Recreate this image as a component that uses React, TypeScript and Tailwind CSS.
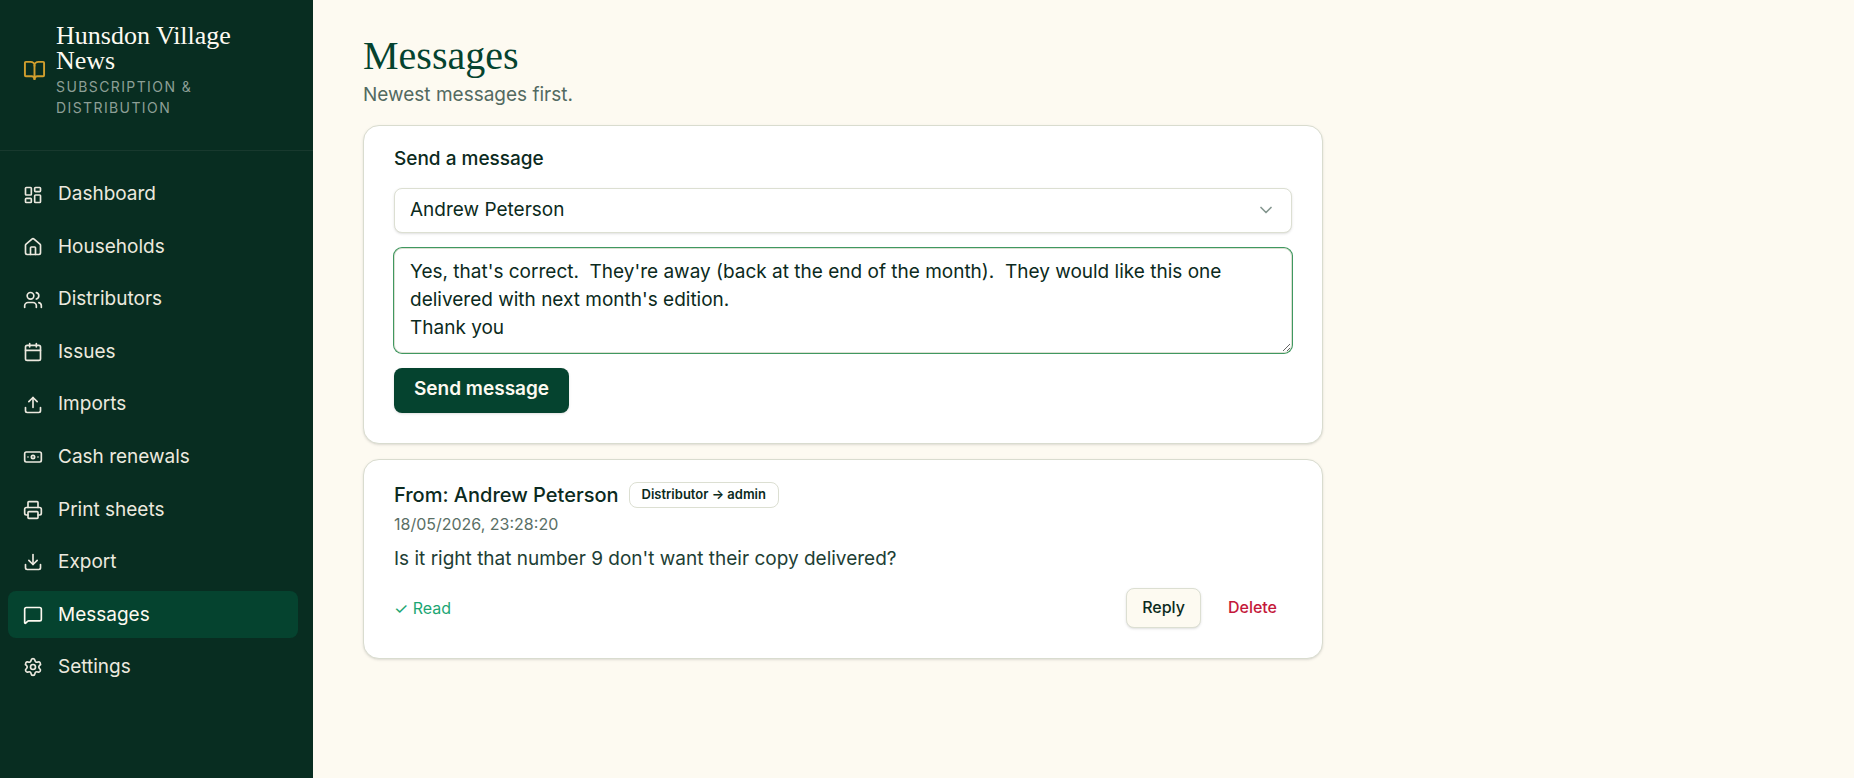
import React, { useState } from 'react';
import {
  Banknote,
  BookOpen,
  Calendar,
  ChevronDown,
  Download,
  House,
  LayoutDashboard,
  MessageSquare,
  Printer,
  Settings,
  Upload,
  Users,
} from 'lucide-react';

const navItems = [
  { label: 'Dashboard', icon: LayoutDashboard },
  { label: 'Households', icon: House },
  { label: 'Distributors', icon: Users },
  { label: 'Issues', icon: Calendar },
  { label: 'Imports', icon: Upload },
  { label: 'Cash renewals', icon: Banknote },
  { label: 'Print sheets', icon: Printer },
  { label: 'Export', icon: Download },
  { label: 'Messages', icon: MessageSquare, active: true },
  { label: 'Settings', icon: Settings },
];

const draft = `Yes, that's correct.  They're away (back at the end of the month).  They would like this one delivered with next month's edition.
Thank you`;

const Sidebar: React.FC = () => (
  <aside className="w-[313px] shrink-0 bg-[#082d21] text-[#ece9df]">
    <div className="flex items-center gap-[10px] border-b border-[#18392e] pt-[23px] pr-6 pb-8 pl-[23px]">
      <BookOpen size={23} className="shrink-0 text-[#d19f2e]" />
      <div>
        <p className="font-['Liberation_Serif',serif] text-[26px] leading-[25px] text-[#fdfaf1]">Hunsdon Village News</p>
        <p className="mt-[3px] text-sm leading-[21px] tracking-widest text-[#8d9f96] uppercase">Subscription &amp; Distribution</p>
      </div>
    </div>
    <nav className="flex h-[560px] flex-col justify-between py-5 pr-[15px] pl-2">
      {navItems.map(({ label, icon: Icon, active }) => (
        <a
          key={label}
          href="#"
          className={
            active
              ? 'flex h-[47px] items-center gap-[15px] rounded-lg bg-[#05432f] px-[15px] text-[19px] text-[#fdfaf1]'
              : 'flex h-[47px] items-center gap-[15px] rounded-lg px-[15px] text-[19px]'
          }
        >
          <Icon size={20} className="shrink-0" />
          {label}
        </a>
      ))}
    </nav>
  </aside>
);

const SendCard: React.FC = () => {
  const [body, setBody] = useState(draft);

  return (
    <section className="rounded-2xl border border-[#d9dccf] bg-white px-[30px] pt-5 pb-[30px] shadow-sm">
      <h2 className="text-[19px] leading-[26px] font-medium">Send a message</h2>
      <form className="mt-4 flex flex-col items-start gap-[15px]" onSubmit={(e) => e.preventDefault()}>
        <div className="relative w-full">
          <select
            aria-label="Recipient"
            className="block h-[45px] w-full appearance-none rounded-lg border border-[#dcdfd2] bg-white px-[15px] text-[19px] shadow-sm outline-none"
          >
            <option>Andrew Peterson</option>
          </select>
          <ChevronDown size={20} className="pointer-events-none absolute top-3 right-4 text-[#84968f]" />
        </div>
        <textarea
          aria-label="Message"
          rows={3}
          value={body}
          onChange={(e) => setBody(e.target.value)}
          className="block h-[105px] w-full resize-y rounded-lg border border-[#dcdfd2] bg-white px-[15px] py-[9px] text-[19px] leading-7 ring-1 ring-[#3f9860] outline-none"
        />
        <button type="submit" className="h-[45px] rounded-lg bg-[#05432f] px-5 pb-[2px] text-[19px] font-semibold text-[#fdfaf1] shadow-sm">
          Send message
        </button>
      </form>
    </section>
  );
};

const MessageCard: React.FC = () => (
  <article className="rounded-2xl border border-[#d9dccf] bg-white px-[30px] pt-[22px] pb-[30px] shadow-sm">
    <div className="flex items-center gap-[10px]">
      <h2 className="text-xl leading-[26px] font-medium">From: Andrew Peterson</h2>
      <span className="flex h-[26px] items-center rounded-lg border border-[#dcdfd2] px-3 text-[13px] font-semibold">
        Distributor → admin
      </span>
    </div>
    <p className="mt-1 text-base leading-6 text-[#5a6f66]">18/05/2026, 23:28:20</p>
    <p className="mt-[9px] text-[19px] leading-7 text-[#213e34]">Is it right that number 9 don't want their copy delivered?</p>
    <div className="mt-[15px] flex items-center justify-between">
      <span className="text-base text-[#1ca673]">✓ Read</span>
      <div className="flex gap-3">
        <button className="h-10 rounded-lg border border-[#dcdfd2] bg-[#fdfaf1] px-[15px] pb-[2px] text-base font-medium shadow-sm">Reply</button>
        <button className="h-10 rounded-lg px-[15px] pb-[2px] text-base font-medium text-[#c4183a]">Delete</button>
      </div>
    </div>
  </article>
);

const App: React.FC = () => {
  return (
    <div className="flex min-h-screen bg-[#fdfaf1] font-['Inter',sans-serif] text-[#0b2a20]">
      <Sidebar />
      <main className="min-w-0 flex-1 px-[50px] pt-8 pb-12">
        <header>
          <h1 className="font-['Liberation_Serif',serif] text-[40px] leading-[48px] text-[#05432f]">Messages</h1>
          <p className="text-[19px] leading-[30px] text-[#536a61]">Newest messages first.</p>
        </header>
        <div className="mt-[15px] flex max-w-[960px] flex-col gap-[15px]">
          <SendCard />
          <MessageCard />
        </div>
      </main>
    </div>
  );
};

export default App;
